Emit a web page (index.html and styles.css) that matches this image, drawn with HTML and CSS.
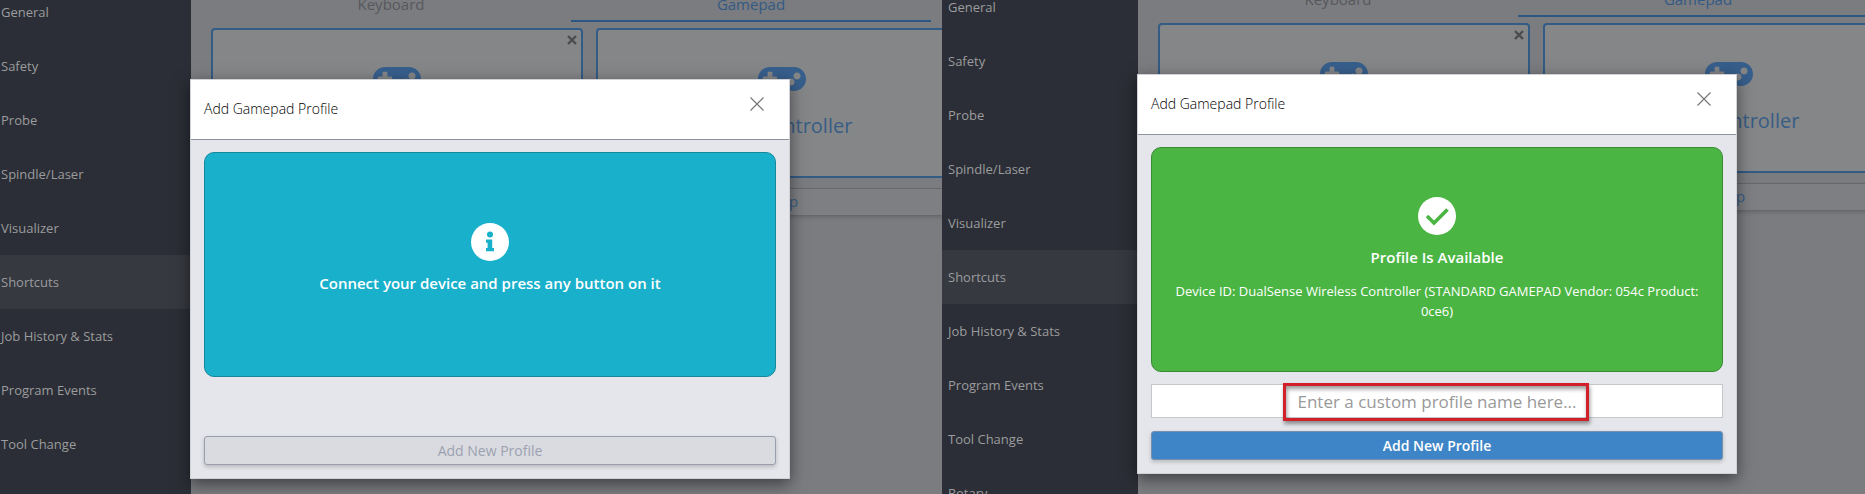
FILE: index.html
```html
<!DOCTYPE html>
<html lang="en">
<head>
<meta charset="utf-8">
<title>Add Gamepad Profile</title>
<link rel="stylesheet" href="styles.css">
</head>
<body>
<svg class="defs" aria-hidden="true">
  <symbol id="gamepad" viewBox="0 96 640 320">
    <path fill-rule="evenodd" d="M480 96H160C71.600 96 0 167.600 0 256s71.600 160 160 160c44.800 0 85.200-18.400 114.200-48h91.500c29 29.500 69.500 48 114.200 48 88.400 0 160-71.600 160-160S568.400 96 480 96zM256 276c0 6.600-5.400 12-12 12h-52v52c0 6.600-5.400 12-12 12h-40c-6.600 0-12-5.400-12-12v-52H76c-6.600 0-12-5.400-12-12v-40c0-6.600 5.400-12 12-12h52v-52c0-6.600 5.400-12 12-12h40c6.600 0 12 5.400 12 12v52h52c6.600 0 12 5.400 12 12v40zm184 68c-26.500 0-48-21.500-48-48s21.500-48 48-48 48 21.500 48 48-21.500 48-48 48zm80-80c-26.500 0-48-21.500-48-48s21.500-48 48-48 48 21.500 48 48-21.500 48-48 48z"/>
  </symbol>
  <symbol id="cross" viewBox="0 0 10 10">
    <path d="M1 1l8 8M9 1L1 9" fill="none" stroke="currentColor" stroke-width="2.400"/>
  </symbol>
  <symbol id="close" viewBox="0 0 14 14">
    <path d="M.5.5l13 13M13.500.5l-13 13" fill="none" stroke="currentColor" stroke-width="1.200"/>
  </symbol>
</svg>

<section class="screen screen-connect">
  <nav class="sidebar">
    <a href="#general">General</a>
    <a href="#safety">Safety</a>
    <a href="#probe">Probe</a>
    <a href="#spindle">Spindle/Laser</a>
    <a href="#visualizer">Visualizer</a>
    <a href="#shortcuts" class="active">Shortcuts</a>
    <a href="#history">Job History &amp; Stats</a>
    <a href="#events">Program Events</a>
    <a href="#tool">Tool Change</a>
    <a href="#rotary">Rotary</a>
  </nav>
  <main class="content">
    <div class="tabs">
      <button type="button" class="tab">Keyboard</button>
      <button type="button" class="tab selected">Gamepad</button>
    </div>
    <div class="cards">
      <article class="card">
        <button type="button" class="remove" aria-label="Remove profile"><svg><use href="#cross"/></svg></button>
        <svg class="pad"><use href="#gamepad"/></svg>
        <span>PS4 Controller</span>
      </article>
      <article class="card">
        <svg class="pad"><use href="#gamepad"/></svg>
        <span>New Controller</span>
      </article>
      <button type="button" class="help">Help</button>
    </div>
  </main>
  <div class="overlay">
    <div class="modal" role="dialog" aria-label="Add Gamepad Profile">
      <header class="modal-head">
        <h2>Add Gamepad Profile</h2>
        <button type="button" class="close" aria-label="Close"><svg><use href="#close"/></svg></button>
      </header>
      <div class="modal-body">
        <div class="notice info">
          <svg class="status" viewBox="0 0 38 38">
            <circle cx="19" cy="19" r="19" fill="#fff"/>
            <circle cx="19" cy="11.500" r="3" fill="#18b0ca"/>
            <path d="M15 16.500h6.200v8.500H23v3.300h-8V25h1.600v-5.200H15z" fill="#18b0ca"/>
          </svg>
          <p>Connect your device and press any button on it</p>
        </div>
        <button type="button" class="submit" disabled>Add New Profile</button>
      </div>
    </div>
  </div>
</section>

<section class="screen screen-available">
  <nav class="sidebar">
    <a href="#general">General</a>
    <a href="#safety">Safety</a>
    <a href="#probe">Probe</a>
    <a href="#spindle">Spindle/Laser</a>
    <a href="#visualizer">Visualizer</a>
    <a href="#shortcuts" class="active">Shortcuts</a>
    <a href="#history">Job History &amp; Stats</a>
    <a href="#events">Program Events</a>
    <a href="#tool">Tool Change</a>
    <a href="#rotary">Rotary</a>
  </nav>
  <main class="content">
    <div class="tabs">
      <button type="button" class="tab">Keyboard</button>
      <button type="button" class="tab selected">Gamepad</button>
    </div>
    <div class="cards">
      <article class="card">
        <button type="button" class="remove" aria-label="Remove profile"><svg><use href="#cross"/></svg></button>
        <svg class="pad"><use href="#gamepad"/></svg>
        <span>PS4 Controller</span>
      </article>
      <article class="card">
        <svg class="pad"><use href="#gamepad"/></svg>
        <span>New Controller</span>
      </article>
      <button type="button" class="help">Help</button>
    </div>
  </main>
  <div class="overlay">
    <div class="modal" role="dialog" aria-label="Add Gamepad Profile">
      <header class="modal-head">
        <h2>Add Gamepad Profile</h2>
        <button type="button" class="close" aria-label="Close"><svg><use href="#close"/></svg></button>
      </header>
      <div class="modal-body">
        <div class="notice success">
          <svg class="status" viewBox="0 0 38 38">
            <circle cx="19" cy="19" r="19" fill="#fff"/>
            <path d="M9 19l7 7 13.500-13.500" fill="none" stroke="#4bb543" stroke-width="3.600"/>
          </svg>
          <p>Profile Is Available</p>
          <p class="device">Device ID: DualSense Wireless Controller (STANDARD GAMEPAD Vendor: 054c Product: 0ce6)</p>
        </div>
        <div class="field">
          <input type="text" class="name" aria-label="Profile name" placeholder="Enter a custom profile name here...">
          <div class="highlight"></div>
        </div>
        <button type="button" class="submit">Add New Profile</button>
      </div>
    </div>
  </div>
</section>
</body>
</html>
```
FILE: styles.css
```css
* {
  box-sizing: border-box;
}

body {
  margin: 0;
  display: flex;
  height: 100vh;
  overflow: hidden;
  background: #7b7c80;
  font-family: "Open Sans", "Noto Sans", sans-serif;
  font-size: 13px;
}

button,
input {
  font-family: inherit;
}

.defs {
  position: absolute;
  width: 0;
  height: 0;
}

.screen {
  --crop: 0px;
  --inset: 0px;
  position: relative;
  display: flex;
  min-width: 0;
  overflow: hidden;
}

.screen-connect {
  flex: 942 1 0;
}

.screen-available {
  --crop: 5px;
  --inset: 5px;
  flex: 923 1 0;
}

.sidebar {
  flex: none;
  width: calc(191px + var(--inset));
  margin-top: calc(-15px - var(--crop));
  background: #2b2e36;
}

.sidebar a {
  display: flex;
  align-items: center;
  height: 54px;
  padding-left: calc(1px + var(--inset));
  color: #9b9c9d;
  text-decoration: none;
}

.sidebar .active {
  background: #363940;
}

.content {
  flex: none;
  margin-top: calc(-8px - var(--crop));
  padding-left: 20px;
}

.tabs {
  display: flex;
  width: 720px;
}

.tab {
  flex: 1;
  height: 30px;
  padding: 0 0 4px;
  border: 0;
  border-bottom: 2px solid transparent;
  background: none;
  color: #57585c;
  font-size: 15px;
  line-height: 24px;
}

.tab.selected {
  border-bottom-color: #2d5783;
  color: #335a84;
}

.cards {
  display: grid;
  grid-template-columns: 372px 372px;
  gap: 10px 13px;
  margin-top: 6px;
}

.card {
  position: relative;
  display: flex;
  flex-direction: column;
  align-items: center;
  gap: 21px;
  height: 150px;
  padding-top: 37px;
  border: 2px solid #325b85;
  border-radius: 4px;
  background: #858688;
  color: #385d85;
  font-size: 20px;
}

.pad {
  width: 48px;
  height: 24px;
  fill: #375f8c;
}

.remove {
  position: absolute;
  top: 5px;
  right: 4px;
  padding: 0;
  border: 0;
  background: none;
  color: #4b4c4e;
  line-height: 0;
}

.remove svg {
  width: 10px;
  height: 10px;
}

.help {
  grid-column: 1 / -1;
  height: 28px;
  padding: 0 0 2px 385px;
  border: 1px solid #67686c;
  background: #7e7f83;
  box-shadow: 0 2px 3px #6c6d71;
  color: #385d85;
  font-size: 15px;
}

.overlay {
  position: absolute;
  inset: 0;
  padding: calc(79px - var(--crop)) 0 0 calc(190px + var(--inset));
}

.modal {
  display: flex;
  flex-direction: column;
  width: 600px;
  height: 400px;
  border: 1px solid #cfd1d4;
  background: #e5e6eb;
  box-shadow: 0 5px 15px rgba(0, 0, 0, 0.5);
}

.modal-head {
  display: flex;
  justify-content: space-between;
  height: 60px;
  padding: 0 25px 0 13px;
  border-bottom: 1px solid #8f939e;
  background: #fff;
}

.modal-head h2 {
  margin: 0;
  color: #000;
  font-size: 14px;
  font-weight: 300;
  line-height: 58px;
}

.close {
  height: 48px;
  padding: 0;
  border: 0;
  background: none;
  color: #777;
  line-height: 0;
}

.close svg {
  width: 14px;
  height: 14px;
}

.modal-body {
  flex: 1;
  display: flex;
  flex-direction: column;
  padding: 12px 13px 13px;
}

.notice {
  display: flex;
  flex-direction: column;
  align-items: center;
  justify-content: center;
  height: 225px;
  padding: 0 20px 2px;
  border: 1px solid;
  border-radius: 10px;
  color: #fff;
  text-align: center;
  font-weight: 600;
}

.notice.info {
  padding-bottom: 13px;
  border-color: #17879b;
  background: #18b0ca;
}

.notice.success {
  border-color: #3a8b35;
  background: #4bb543;
}

.status {
  width: 38px;
  height: 38px;
}

.notice p {
  margin: 12px 0 0;
  font-size: 15px;
  line-height: 20px;
}

.notice .device {
  margin-top: 14px;
  font-size: 13px;
  font-weight: 500;
}

.field {
  position: relative;
  margin-top: 12px;
}

.name {
  display: block;
  width: 100%;
  height: 34px;
  border: 1px solid #c6c7ca;
  background: #fff;
  font-size: 17px;
  text-align: center;
}

.name::placeholder {
  color: #999;
}

.highlight {
  position: absolute;
  inset: -1px 134px -3px 132px;
  border: 3px solid #d2202a;
  box-shadow: 1px 3px 4px rgba(0, 0, 0, 0.4), inset 1px 3px 4px rgba(0, 0, 0, 0.4);
  pointer-events: none;
}

.submit {
  height: 29px;
  margin-top: auto;
  border: 1px solid #7690ad;
  border-radius: 3px;
  background: #3e85c7;
  box-shadow: 0 2px 4px rgba(0, 0, 0, 0.2);
  color: #fff;
  font-size: 14px;
  font-weight: 600;
}

.submit:disabled {
  border-color: #9a9fae;
  background: #d9dbe1;
  color: #9ca1af;
  font-weight: 400;
}
```
